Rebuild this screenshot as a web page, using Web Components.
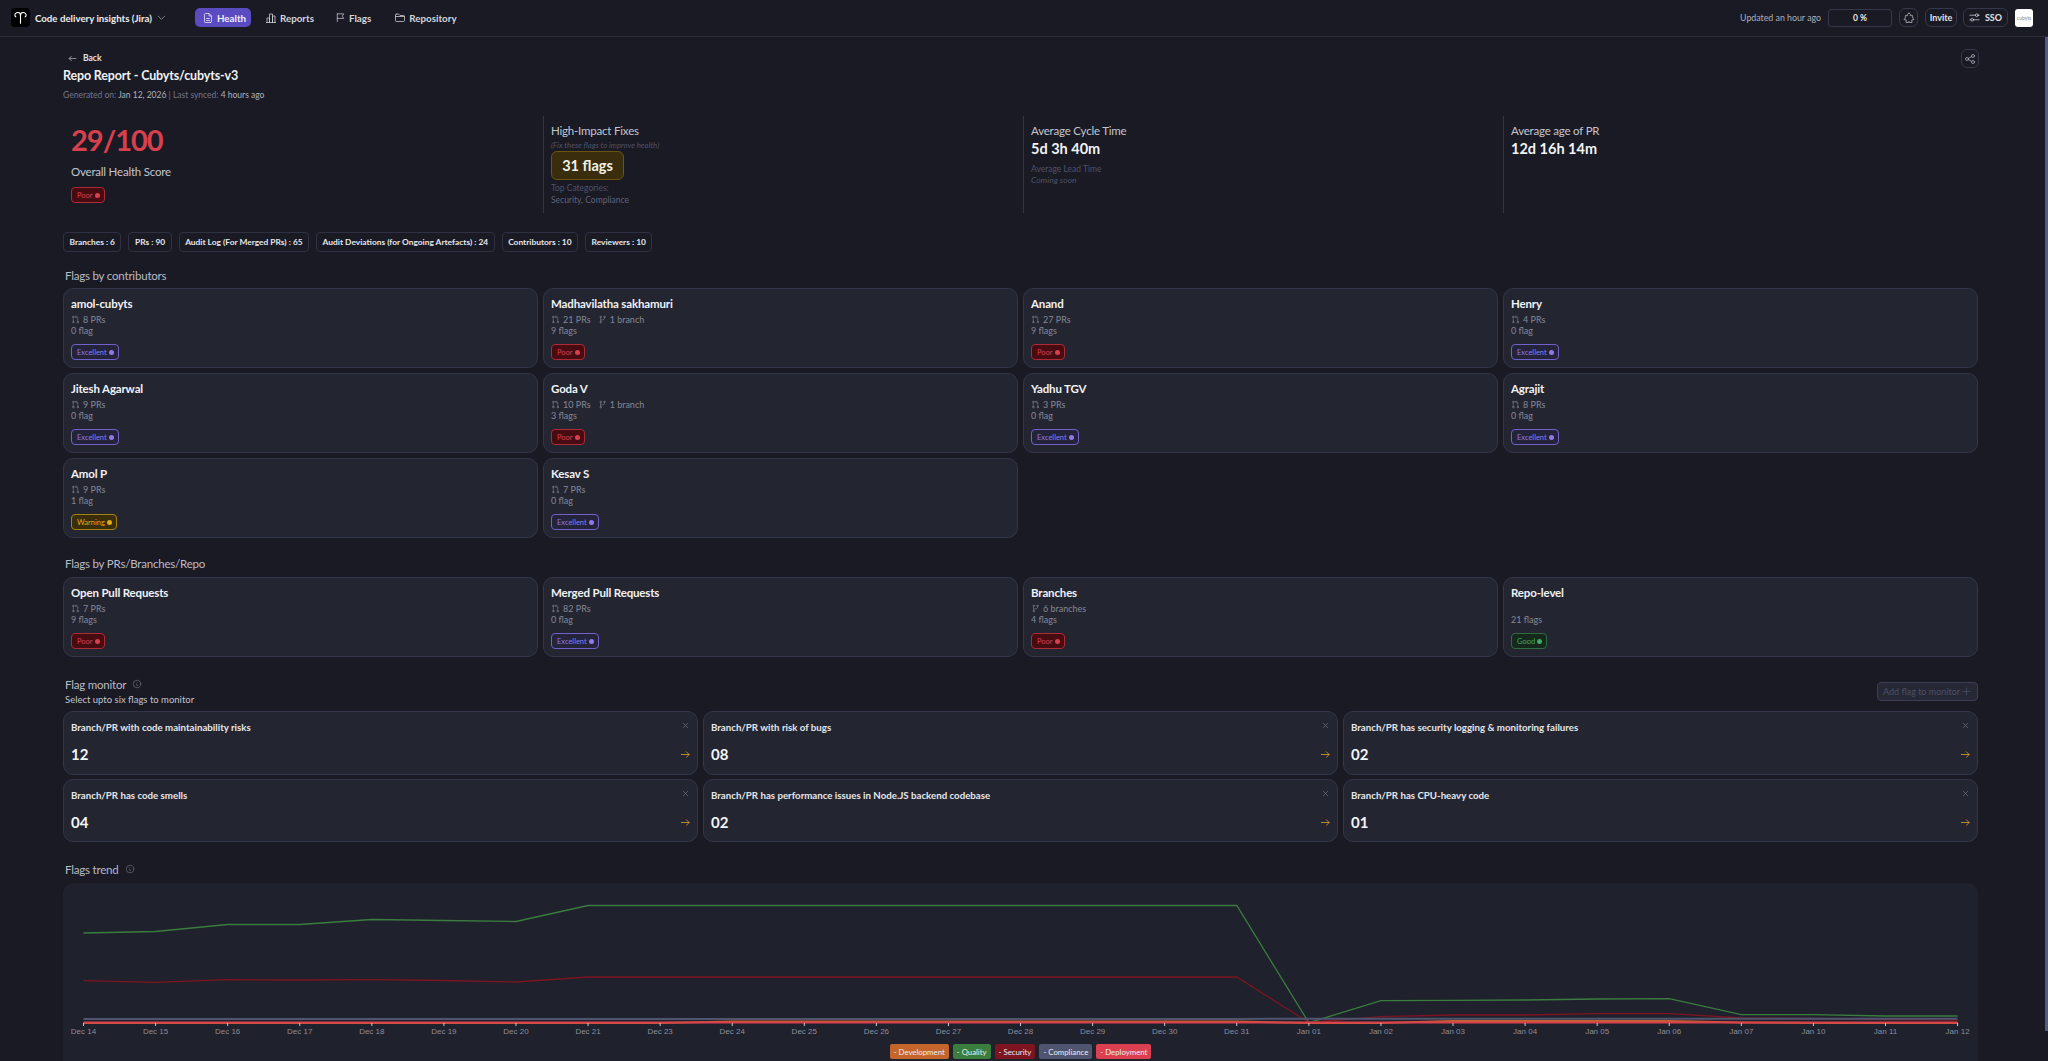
<!DOCTYPE html>
<html lang="en">
<head>
<meta charset="utf-8">
<title>Repo Report</title>
<style>
  html, body { margin: 0; height: 100%; overflow: hidden; background: #191a24; }
  body { font-family: Lato, "Noto Sans", sans-serif; color: #e8e9ee; }
</style>
</head>
<body>
<app-shell>
  <top-bar slot="top"></top-bar>
  <report-head></report-head>
  <stat-row></stat-row>
  <pill-row>
    <count-pill>Branches : 6</count-pill>
    <count-pill>PRs : 90</count-pill>
    <count-pill>Audit Log (For Merged PRs) : 65</count-pill>
    <count-pill>Audit Deviations (for Ongoing Artefacts) : 24</count-pill>
    <count-pill>Contributors : 10</count-pill>
    <count-pill>Reviewers : 10</count-pill>
  </pill-row>
  <section-title style="margin-top:15px">Flags by contributors</section-title>
  <card-grid style="margin-top:5px">
    <flag-card name="amol-cubyts" prs="8 PRs" flags="0 flag" status="Excellent"></flag-card>
    <flag-card name="Madhavilatha sakhamuri" prs="21 PRs" branches="1 branch" flags="9 flags" status="Poor"></flag-card>
    <flag-card name="Anand" prs="27 PRs" flags="9 flags" status="Poor"></flag-card>
    <flag-card name="Henry" prs="4 PRs" flags="0 flag" status="Excellent"></flag-card>
    <flag-card name="Jitesh Agarwal" prs="9 PRs" flags="0 flag" status="Excellent"></flag-card>
    <flag-card name="Goda V" prs="10 PRs" branches="1 branch" flags="3 flags" status="Poor"></flag-card>
    <flag-card name="Yadhu TGV" prs="3 PRs" flags="0 flag" status="Excellent"></flag-card>
    <flag-card name="Agrajit" prs="8 PRs" flags="0 flag" status="Excellent"></flag-card>
    <flag-card name="Amol P" prs="9 PRs" flags="1 flag" status="Warning"></flag-card>
    <flag-card name="Kesav S" prs="7 PRs" flags="0 flag" status="Excellent"></flag-card>
  </card-grid>
  <section-title style="margin-top:17px">Flags by PRs/Branches/Repo</section-title>
  <card-grid style="margin-top:6px">
    <flag-card name="Open Pull Requests" prs="7 PRs" flags="9 flags" status="Poor"></flag-card>
    <flag-card name="Merged Pull Requests" prs="82 PRs" flags="0 flag" status="Excellent"></flag-card>
    <flag-card name="Branches" branches="6 branches" flags="4 flags" status="Poor"></flag-card>
    <flag-card name="Repo-level" flags="21 flags" status="Good"></flag-card>
  </card-grid>
  <monitor-head style="margin-top:19px"></monitor-head>
  <monitor-grid>
    <monitor-card title="Branch/PR with code maintainability risks" value="12"></monitor-card>
    <monitor-card title="Branch/PR with risk of bugs" value="08"></monitor-card>
    <monitor-card title="Branch/PR has security logging &amp; monitoring failures" value="02"></monitor-card>
    <monitor-card title="Branch/PR has code smells" value="04"></monitor-card>
    <monitor-card title="Branch/PR has performance issues in Node.JS backend codebase" value="02"></monitor-card>
    <monitor-card title="Branch/PR has CPU-heavy code" value="01"></monitor-card>
  </monitor-grid>
  <section-title info style="margin-top:19px">Flags trend</section-title>
  <trend-chart style="margin-top:6px"></trend-chart>
</app-shell>

<script>
const icons = {
  doc: '<path d="M14 3v4a1 1 0 0 0 1 1h4"/><path d="M17 21H7a2 2 0 0 1-2-2V5a2 2 0 0 1 2-2h7l5 5v11a2 2 0 0 1-2 2z"/><path d="M9 13h6M9 17h6"/>',
  chart: '<path d="M3 21h18"/><path d="M4 21v-9h5v9M9 21V4h6v17M15 21v-13h5v13"/>',
  flag: '<path d="M5 21V4"/><path d="M5 4h14l-3 5 3 5H5"/>',
  folder: '<path d="M5 4h4l3 3h7a2 2 0 0 1 2 2v8a2 2 0 0 1-2 2H5a2 2 0 0 1-2-2V6a2 2 0 0 1 2-2"/><path d="M3 9h18"/>',
  chevron: '<path d="M5 9l7 7 7-7"/>',
  back: '<path d="M21 12H4"/><path d="M9 6l-6 6 6 6"/>',
  arrow: '<path d="M3 12h17"/><path d="M14 6l6 6-6 6"/>',
  close: '<path d="M6 6l12 12M18 6L6 18"/>',
  plus: '<path d="M12 4v16M4 12h16"/>',
  pr: '<circle cx="6" cy="19" r="2"/><circle cx="6" cy="5" r="2"/><circle cx="18" cy="19" r="2"/><path d="M6 7v10"/><path d="M12 5h4a2 2 0 0 1 2 2v10"/><path d="M15 8l-3-3 3-3"/>',
  branch: '<circle cx="7" cy="19" r="2"/><circle cx="7" cy="5" r="2"/><circle cx="17" cy="5" r="2"/><path d="M7 7v10"/><path d="M17 7v2a4 4 0 0 1-4 4H7"/>',
  info: '<circle cx="12" cy="12" r="9"/><path d="M12 8h.01M11 12h1v4h1"/>',
  share: '<circle cx="6" cy="12" r="3"/><circle cx="18" cy="6" r="3"/><circle cx="18" cy="18" r="3"/><path d="M8.7 10.7l6.6-3.4M8.7 13.3l6.6 3.4"/>',
  sliders: '<circle cx="17" cy="7" r="3"/><circle cx="7" cy="17" r="3"/><path d="M2 7h12M20 7h2M2 17h2M10 17h12"/>',
  piece: '<path d="M12 2.500c2 0 3.200 1.500 3 3.500l-.3 1.500L19 7l.5 5 2.500 3-4.500 1 .5 5h-5l-1-2.500-1 2.500H6l.5-5L2 15l2.500-3L5 7l4.300.500L9 6c-.2-2 1-3.500 3-3.500z"/>',
  aries: '<path d="M12 21V9a4.500 4.500 0 0 0-9-1c0 1.500.7 2.500 1.500 3"/><path d="M12 9a4.500 4.500 0 0 1 9-1c0 1.500-.7 2.500-1.500 3"/>',
}

function icon(name, size, width = 1.5) {
  return `<svg width="${size}" height="${size}" viewBox="0 0 24 24" fill="none" stroke="currentColor" stroke-width="${width}" stroke-linecap="round" stroke-linejoin="round" style="display:block;flex:none">${icons[name]}</svg>`
}

function simple(tag, css, html) {
  const template = document.createElement('template')
  template.innerHTML = `<style>:host, * { box-sizing: border-box; } ${css}</style>${html}`
  customElements.define(tag, class extends HTMLElement {
    constructor() {
      super()
      this.attachShadow({ mode: 'open' }).appendChild(template.content.cloneNode(true))
    }
  })
}

simple('app-shell', `
  :host { display: flex; flex-direction: column; position: relative; height: 100vh; }
  .scroll { flex: 1; min-height: 0; overflow-y: scroll; scrollbar-width: none; padding: 14px 70px 20px 63px; }
  .thumb { position: absolute; top: 37px; right: 0; width: 3px; height: 994px; background: #565b7c; }
`, `<slot name="top"></slot><div class="scroll"><slot></slot></div><div class="thumb"></div>`)

simple('top-bar', `
  :host { display: flex; align-items: center; flex: none; height: 37px; border-bottom: 1px solid #2b2d3c; padding: 0 15px 1px 11px; font-size: 9.8px; font-weight: 700; color: #dfe0e6; }
  .logo { width: 19px; height: 19px; background: #000; border-radius: 4px; color: #fff; display: grid; place-items: center; }
  .app { margin-left: 5px; font-size: 9.7px; color: #eceded; }
  .chev { margin-left: 4px; color: #9a9cab; }
  nav { display: flex; align-items: center; margin-left: 28px; }
  nav a { display: flex; align-items: center; gap: 3px; height: 19px; color: #d4d5dc; }
  nav a.on { background: #5a4bc0; color: #f1effc; border-radius: 5px; padding: 0 6px 0 7px; width: 56px; }
  .right { margin-left: auto; display: flex; align-items: center; }
  .upd { color: #aeb0bb; font-weight: 400; font-size: 8.8px; }
  .prog { width: 64px; height: 18px; border: 1px solid #35374a; border-radius: 3px; margin-left: 7px; display: grid; place-items: center; font-size: 8.5px; color: #e8e9ee; }
  .btn { height: 19px; border: 1px solid #35374a; border-radius: 6px; display: flex; align-items: center; justify-content: center; gap: 5px; color: #e2e3e8; font-size: 9px; }
  .avatar { width: 18px; height: 18px; background: #fff; border-radius: 3px; margin-left: 7px; color: #888; font-size: 5px; font-weight: 400; display: grid; place-items: center; overflow: hidden; }
`, `
  <div class="logo">${icon('aries', 15, 1.8)}</div>
  <span class="app">Code delivery insights (Jira)</span>
  <span class="chev">${icon('chevron', 11, 1.6)}</span>
  <nav>
    <a class="on">${icon('doc', 12)}Health</a>
    <a style="margin-left:14px">${icon('chart', 12)}Reports</a>
    <a style="margin-left:21px">${icon('flag', 11)}Flags</a>
    <a style="margin-left:23px">${icon('folder', 12)}Repository</a>
  </nav>
  <div class="right">
    <span class="upd">Updated an hour ago</span>
    <div class="prog">0 %</div>
    <div class="btn" style="width:19px;margin-left:7px;color:#b9bac4">${icon('piece', 12)}</div>
    <div class="btn" style="width:32px;margin-left:7px">Invite</div>
    <div class="btn" style="width:45px;margin-left:6px">${icon('sliders', 11)}SSO</div>
    <div class="avatar">cubyts</div>
  </div>
`)

simple('report-head', `
  :host { display: block; position: relative; height: 51px; }
  .back { display: flex; align-items: center; gap: 6px; height: 14px; padding-left: 5px; font-size: 8.5px; font-weight: 700; color: #e1e2e8; }
  h1 { margin: 1px 0 0; font-size: 12.5px; letter-spacing: -.15px; line-height: 20px; font-weight: 700; color: #eff0f3; }
  p { margin: 2px 0 0; font-size: 8.5px; line-height: 14px; color: #72758a; }
  b { font-weight: 400; color: #b0b2be; }
  .share { position: absolute; top: -2px; right: -1px; width: 18px; height: 19px; border: 1px solid #35374a; border-radius: 6px; display: grid; place-items: center; color: #aeb0bb; }
`, `
  <div class="back">${icon('back', 9)}Back</div>
  <h1>Repo Report - Cubyts/cubyts-v3</h1>
  <p>Generated on: <b>Jan 12, 2026</b> | Last synced: <b>4 hours ago</b></p>
  <div class="share">${icon('share', 12)}</div>
`)

simple('stat-row', `
  :host { display: grid; grid-template-columns: repeat(4, 1fr); gap: 5px; height: 97px; margin-top: 14px; }
  .cell { border-left: 1px solid #32344a; padding: 7px 0 0 7px; }
  .cell:first-of-type { border: 0; padding: 6px 0 0 8px; }
  .score { font-size: 29px; letter-spacing: -1px; line-height: 36px; font-weight: 700; color: #d8404e; }
  .label { font-size: 11.5px; letter-spacing: -.2px; line-height: 16px; color: #c4c5cf; }
  .note { font-size: 7.8px; line-height: 10px; margin-top: 1px; font-style: italic; color: #4f5268; }
  .flags { display: flex; align-items: center; justify-content: center; width: 73px; height: 29px; margin-top: 1px; background: #392d0d; border: 1px solid #6a5410; border-radius: 6px; font-size: 14.5px; font-weight: 700; color: #f3f1e6; }
  .muted { font-size: 8.5px; line-height: 12px; color: #4f5268; }
  .muted.cat { color: #5f627a; }
  .value { font-size: 14.5px; line-height: 19px; font-weight: 700; color: #f2f3f5; }
`, `
  <div class="cell">
    <div class="score">29/100</div>
    <div class="label" style="margin-top:6px">Overall Health Score</div>
    <status-badge kind="Poor" style="margin-top:7px"></status-badge>
  </div>
  <div class="cell">
    <div class="label">High-Impact Fixes</div>
    <div class="note">(Fix these flags to improve health)</div>
    <div class="flags">31 flags</div>
    <div class="muted" style="margin-top:2px">Top Categories:</div>
    <div class="muted cat">Security, Compliance</div>
  </div>
  <div class="cell">
    <div class="label">Average Cycle Time</div>
    <div class="value">5d 3h 40m</div>
    <div class="muted" style="margin-top:5px">Average Lead Time</div>
    <div class="muted" style="font-style:italic;margin-top:-1px">Coming soon</div>
  </div>
  <div class="cell">
    <div class="label">Average age of PR</div>
    <div class="value">12d 16h 14m</div>
  </div>
`)

const badgeColors = {
  Poor: ['#470b12', '#ab2b36', '#d9404e'],
  Excellent: ['#23243a', '#7261c9', '#9079e6'],
  Warning: ['#3a2d0c', '#a5820f', '#e0aa10'],
  Good: ['#14291c', '#2f6a40', '#43a862'],
}

customElements.define('status-badge', class extends HTMLElement {
  connectedCallback() {
    const [bg, line, ink] = badgeColors[this.getAttribute('kind')]
    this.attachShadow({ mode: 'open' }).innerHTML = `
      <style>
        :host { display: flex; }
        span { box-sizing: border-box; display: inline-flex; align-items: center; gap: 2px; height: 16px; padding: 0 4px 0 5px; border: 1px solid ${line}; border-radius: 4px; background: ${bg}; color: ${ink}; font-size: 7.5px; }
        i { width: 5px; height: 5px; border-radius: 50%; background: ${ink}; }
      </style>
      <span>${this.getAttribute('kind')}<i></i></span>`
  }
})

simple('pill-row', `:host { display: flex; gap: 7px; margin-top: 19px; }`, `<slot></slot>`)

simple('count-pill', `
  :host { display: flex; align-items: center; height: 20px; padding: 0 5.5px; border: 1px solid #2f3142; border-radius: 4px; font-size: 8.4px; font-weight: 700; color: #e6e7ec; }
`, `<slot></slot>`)

customElements.define('section-title', class extends HTMLElement {
  connectedCallback() {
    this.attachShadow({ mode: 'open' }).innerHTML = `
      <style>
        :host { box-sizing: border-box; display: flex; align-items: center; gap: 6px; height: 16px; padding-left: 2px; font-size: 11.5px; letter-spacing: -.2px; color: #b9bbc6; }
        span { color: #7d8092; }
      </style>
      <slot></slot>${this.hasAttribute('info') ? `<span>${icon('info', 10, 1.3)}</span>` : ''}`
  }
})

simple('card-grid', `:host { display: grid; grid-template-columns: repeat(4, 1fr); gap: 5px; }`, `<slot></slot>`)

customElements.define('flag-card', class extends HTMLElement {
  connectedCallback() {
    const prs = this.getAttribute('prs')
    const branches = this.getAttribute('branches')
    this.attachShadow({ mode: 'open' }).innerHTML = `
      <style>
        :host, * { box-sizing: border-box; }
        :host { display: block; height: 80px; padding: 7px 7px 0; background: #232530; border: 1px solid #333649; border-radius: 10px; }
        .name { font-size: 11.5px; letter-spacing: -.15px; line-height: 16px; font-weight: 700; color: #f1f2f5; }
        .meta { display: flex; align-items: center; height: 12px; margin-top: 1px; font-size: 9px; color: #858896; }
        .meta span { display: flex; align-items: center; gap: 3px; margin-right: 7px; }
        .flags { font-size: 9px; line-height: 12px; color: #858896; }
        status-badge { margin-top: 7px; }
      </style>
      <div class="name">${this.getAttribute('name')}</div>
      <div class="meta">
        ${prs ? `<span>${icon('pr', 9)}${prs}</span>` : ''}
        ${branches ? `<span>${icon('branch', 9)}${branches}</span>` : ''}
      </div>
      <div class="flags">${this.getAttribute('flags')}</div>
      <status-badge kind="${this.getAttribute('status')}"></status-badge>`
  }
})

simple('monitor-head', `
  :host { display: flex; justify-content: space-between; align-items: flex-start; height: 35px; padding-left: 2px; }
  .t { display: flex; align-items: center; gap: 6px; height: 16px; font-size: 11.5px; letter-spacing: -.2px; color: #b9bbc6; }
  .t span { color: #7d8092; }
  .s { font-size: 9.5px; line-height: 13px; margin-top: 1px; color: #c3c4cd; }
  button { display: flex; align-items: center; justify-content: space-between; width: 101px; height: 19px; margin-top: 6px; padding: 0 5px; background: #262836; border: 1px solid #3c3f54; border-radius: 4px; font: inherit; font-size: 9px; white-space: nowrap; color: #4d5067; }
`, `
  <div>
    <div class="t">Flag monitor <span>${icon('info', 10, 1.3)}</span></div>
    <div class="s">Select upto six flags to monitor</div>
  </div>
  <button>Add flag to monitor ${icon('plus', 11)}</button>
`)

simple('monitor-grid', `:host { display: grid; grid-template-columns: repeat(3, 1fr); grid-auto-rows: 63.5px; gap: 4px 5px; }`, `<slot></slot>`)

customElements.define('monitor-card', class extends HTMLElement {
  connectedCallback() {
    this.attachShadow({ mode: 'open' }).innerHTML = `
      <style>
        :host, * { box-sizing: border-box; }
        :host { display: block; position: relative; padding: 8px 7px 0; background: #232530; border: 1px solid #333649; border-radius: 10px; }
        .t { font-size: 9.7px; line-height: 14px; font-weight: 700; color: #e6e7ec; }
        .v { margin-top: 10px; font-size: 15px; line-height: 20px; font-weight: 700; color: #f4f5f7; }
        .x, .go { position: absolute; right: 7px; }
        .x { top: 9px; color: #7d8092; }
        .go { top: 37px; color: #c99a2e; right: 6px; }
      </style>
      <div class="t">${this.getAttribute('title')}</div>
      <div class="v">${this.getAttribute('value')}</div>
      <span class="x">${icon('close', 9)}</span>
      <span class="go">${icon('arrow', 11, 1.9)}</span>`
  }
})

const dates = ['Dec 14','Dec 15','Dec 16','Dec 17','Dec 18','Dec 19','Dec 20','Dec 21','Dec 23','Dec 24','Dec 25','Dec 26','Dec 27','Dec 28','Dec 29','Dec 30','Dec 31','Jan 01','Jan 02','Jan 03','Jan 04','Jan 05','Jan 06','Jan 07','Jan 10','Jan 11','Jan 12']

const series = [
  { color: '#3a7d3e', y: [50,48.5,41.5,41.5,36.5,37.5,38.5,22.5,22.5,22.5,22.5,22.5,22.5,22.5,22.5,22.5,22.5,139.7,117.7,117.3,117,116,115.7,131.7,131.7,133,133] },
  { color: '#7d1420', y: [97.7,99.3,96.7,97,96.7,97.5,99,94,94,94,94,94,94,94,94,94,94,139.5,133.7,132,132,130.7,130.7,135,135.5,136.5,137] },
  { color: '#4f5470', width: 2, y: dates.map((d, i) => i < 17 ? 136 : 135.7) },
  { color: '#c4652b', width: 2, y: [140,140,140,140,140,140,140,140,140,138.5,138.5,138.5,138.5,138.5,138.5,138.5,138.5,140,140,138,138,138,138,139.5,140,140,140] },
  { color: '#dc4050', width: 2, y: dates.map(() => 139.5) },
]

const legend = [['Development', '#c4652b'], ['Quality', '#3a7d3e'], ['Security', '#7d1420'], ['Compliance', '#4f5470'], ['Deployment', '#dc4050']]

simple('trend-chart', `
  :host { display: block; height: 190px; background: #1f212c; border-radius: 10px; }
  svg { display: block; }
  .legend { display: flex; justify-content: center; gap: 4px; }
  .legend span { display: flex; align-items: center; height: 15px; padding: 0 4px; border-radius: 2px; font-size: 7.8px; color: #eceded; }
`, `
  <svg width="1915" height="161" viewBox="0 0 1915 161">
    ${series.map(s => `<polyline fill="none" stroke="${s.color}" stroke-width="${s.width || 1.3}" points="${s.y.map((y, i) => `${20.5 + i * 72.08},${y}`).join(' ')}"/>`).join('')}
    ${dates.map((d, i) => `<path d="M${20.5 + i * 72.08} 140v3" stroke="#c9cad2"/><text x="${20.5 + i * 72.08}" y="150.5" text-anchor="middle" font-family="Liberation Sans" font-size="8" fill="#8b8d9c">${d}</text>`).join('')}
  </svg>
  <div class="legend">${legend.map(([name, color]) => `<span style="background:${color}">- ${name}</span>`).join('')}</div>
`)
</script>
</body>
</html>
